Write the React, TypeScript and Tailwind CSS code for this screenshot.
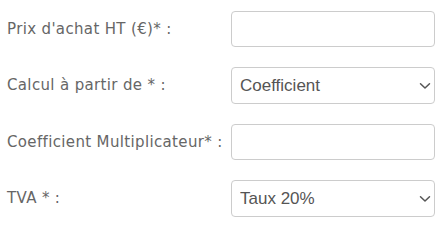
import React from "react";

function Chevron() {
  return (
    <svg
      className="pointer-events-none absolute right-[4px] top-1/2 -translate-y-1/2"
      width="12"
      height="8"
      viewBox="0 0 12 8"
      fill="none"
    >
      <path d="M1.5 1.8 L6 6 L10.5 1.8" stroke="#555" strokeWidth="1.5" strokeLinecap="round" strokeLinejoin="round" />
    </svg>
  );
}

function Label({ children }: { children: React.ReactNode }) {
  return (
    <label
      className="w-[224px] shrink-0 text-[15px] tracking-[0.35px] text-[#666] whitespace-nowrap"
      style={{ fontFamily: '"DejaVu Sans", sans-serif' }}
    >
      {children}
    </label>
  );
}

export default function App() {
  return (
    <div className="w-[446px] h-[226px] bg-white pl-[7px] pt-[11px] flex flex-col gap-[20px]">
      <div className="flex items-center">
        <Label>Prix d'achat HT (€)* :</Label>
        <input
          type="text"
          className="w-[204px] h-[36px] rounded-[4px] border border-[#ccc] bg-white outline-none"
        />
      </div>
      <div className="flex items-center">
        <Label>Calcul à partir de * :</Label>
        <div className="relative w-[204px] h-[37px]">
          <select
            className="appearance-none w-full h-full rounded-[4px] border border-[#ccc] bg-white pl-[8px] text-[17px] text-[#555] outline-none"
            style={{ fontFamily: '"Liberation Sans", Arial, sans-serif' }}
            defaultValue="coef"
          >
            <option value="coef">Coefficient</option>
            <option value="marge">Marge</option>
          </select>
          <Chevron />
        </div>
      </div>
      <div className="flex items-center">
        <Label>Coefficient Multiplicateur* :</Label>
        <input
          type="text"
          className="w-[204px] h-[36px] rounded-[4px] border border-[#ccc] bg-white outline-none"
        />
      </div>
      <div className="flex items-center">
        <Label>TVA * :</Label>
        <div className="relative w-[204px] h-[37px]">
          <select
            className="appearance-none w-full h-full rounded-[4px] border border-[#ccc] bg-white pl-[8px] text-[17px] text-[#555] outline-none"
            style={{ fontFamily: '"Liberation Sans", Arial, sans-serif' }}
            defaultValue="20"
          >
            <option value="20">Taux 20%</option>
            <option value="10">Taux 10%</option>
            <option value="5.5">Taux 5,5%</option>
          </select>
          <Chevron />
        </div>
      </div>
    </div>
  );
}
